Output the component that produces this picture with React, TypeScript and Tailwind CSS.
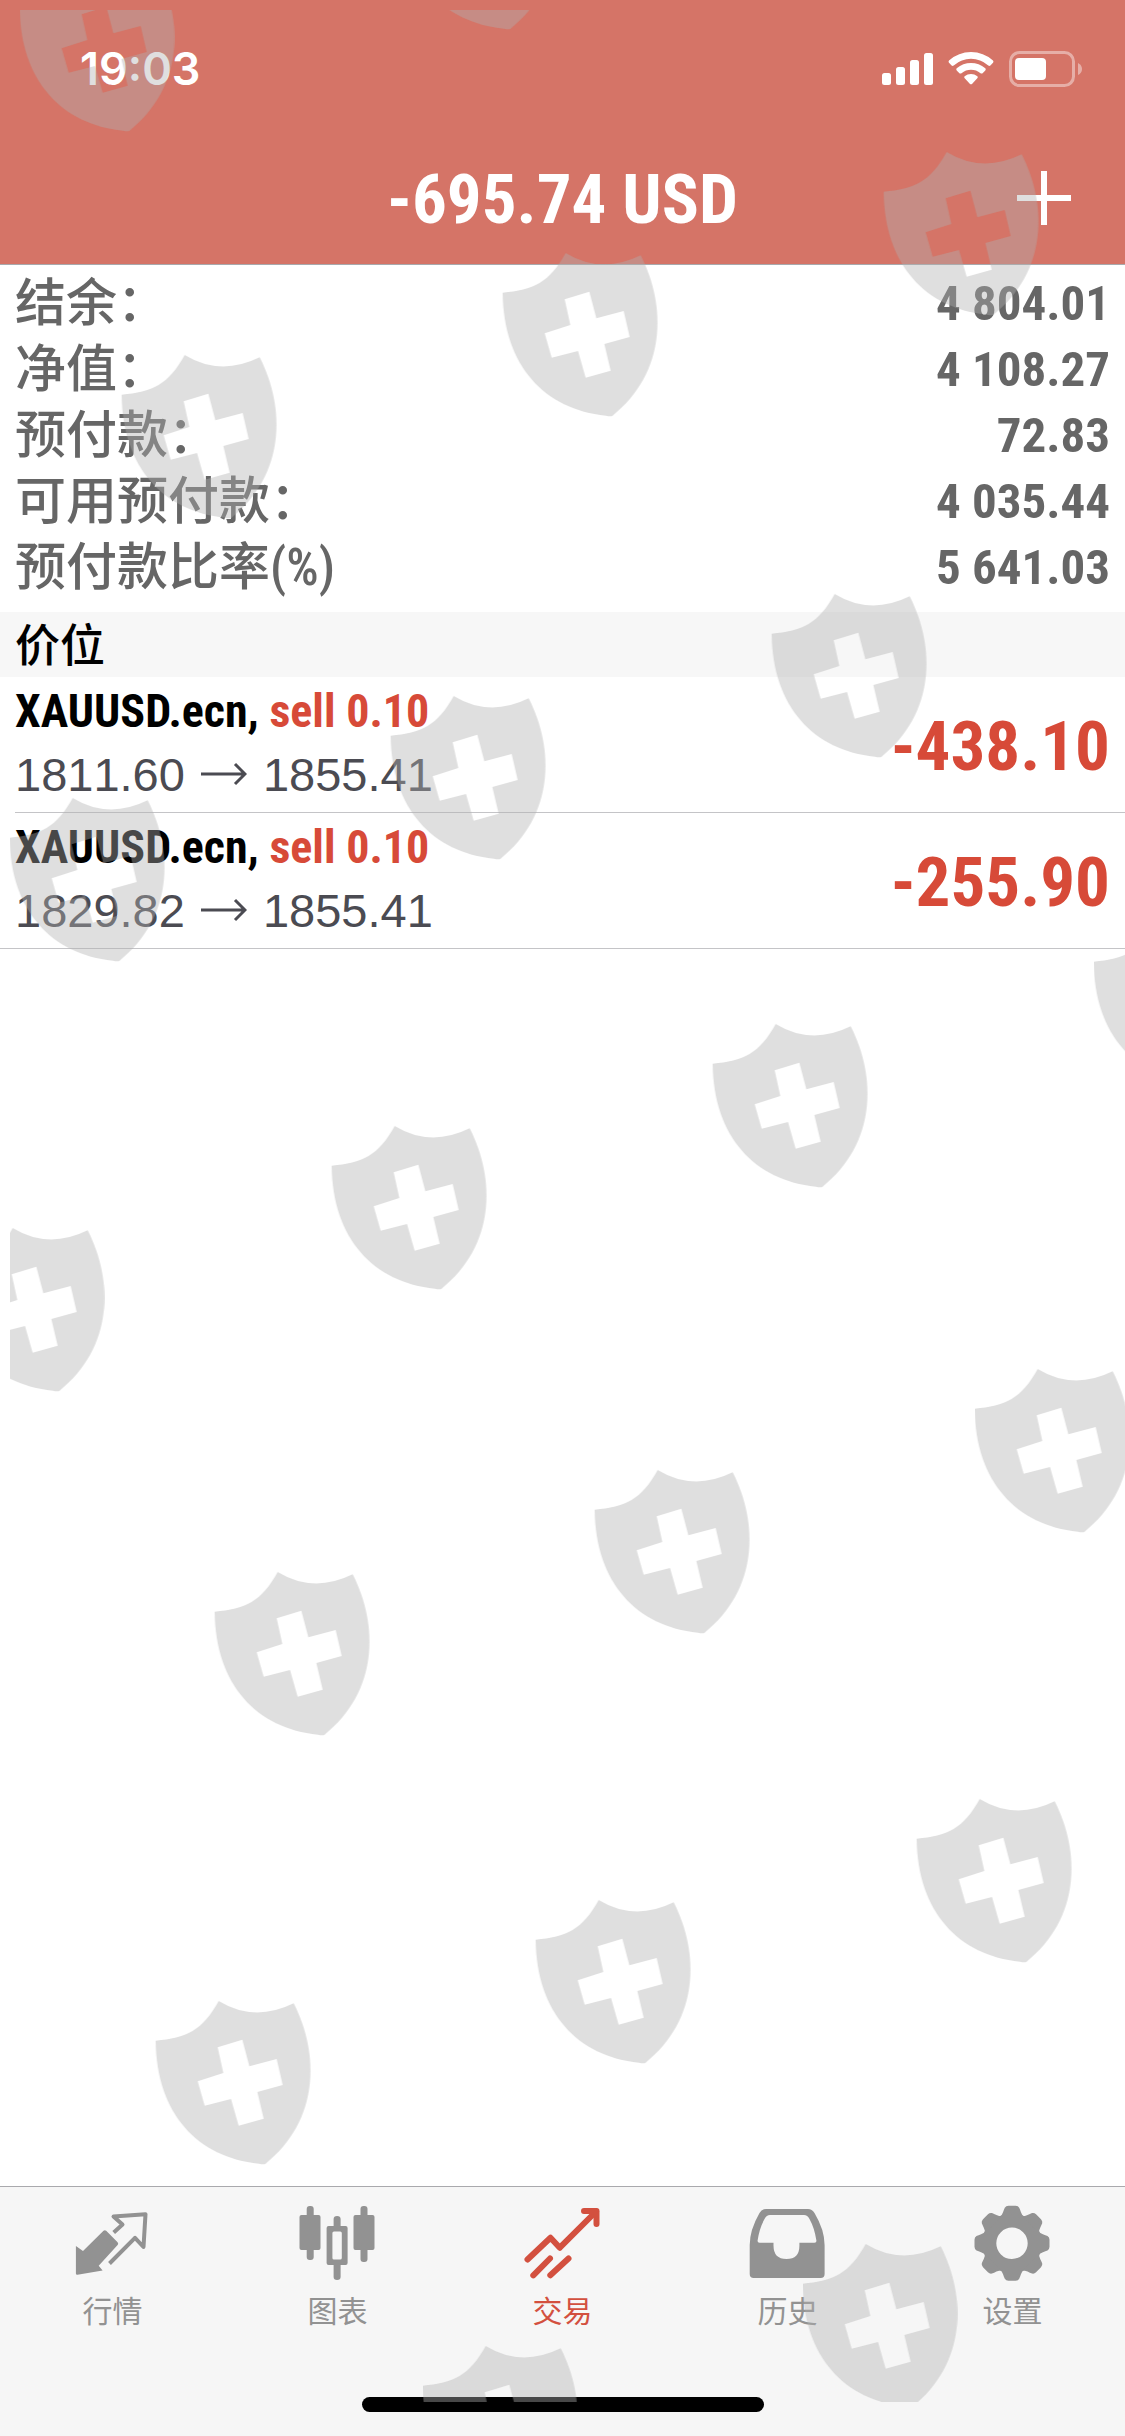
import React from "react";

const account = [
  { label: "结余：", value: "4 804.01" },
  { label: "净值：", value: "4 108.27" },
  { label: "预付款：", value: "72.83" },
  { label: "可用预付款：", value: "4 035.44" },
  { label: "预付款比率(%)", value: "5 641.03" },
];

const positions = [
  { symbol: "XAUUSD.ecn,", side: "sell 0.10", open: "1811.60", current: "1855.41", profit: "-438.10" },
  { symbol: "XAUUSD.ecn,", side: "sell 0.10", open: "1829.82", current: "1855.41", profit: "-255.90" },
];

/* Upper-left peak of every shield in the watermark. */
const shields = [
  [83, -32], [464, -134],
  [185, 355], [566, 253], [947, 152],
  [73, 798], [454, 696], [835, 594],
  [13, 1228], [395, 1126], [776, 1024], [1157, 922],
  [278, 1572], [658, 1470], [1038, 1369],
  [219, 2001], [599, 1900], [980, 1799],
  [486, 2346], [866, 2244],
];

function Watermark() {
  return (
    <svg
      aria-hidden="true"
      viewBox="0 0 1125 2436"
      preserveAspectRatio="xMinYMin slice"
      className="pointer-events-none absolute inset-0 h-full w-full"
    >
      <defs>
        <clipPath id="area">
          <rect x="10" y="10" width="1115" height="2392" />
        </clipPath>
        <path
          id="shield"
          fillRule="evenodd"
          transform="translate(-76 -13.7) scale(0.3333)"
          d="M227 41Q334 106 452 48C530 200 530 400 367 530C360 532 354 530 348 529C165 510 40 380 38 160C130 152 178 130 227 41ZM224 180L241 257L164 282L185 355L264 335L287 415L362 394L343 314L419 293L401 215L319 237L298 157Z"
        />
      </defs>
      <g clipPath="url(#area)" fill="#b0b0b0" opacity="0.41">
        {shields.map(([x, y]) => (
          <use key={`${x}-${y}`} href="#shield" x={x} y={y} />
        ))}
      </g>
    </svg>
  );
}

function StatusIcons() {
  return (
    <svg viewBox="0 0 202 36" className="h-9 w-[202px]" aria-label="信号 无线网络 电池" role="img">
      <g fill="#fff">
        <rect x="0" y="22" width="9" height="12" rx="2.5" />
        <rect x="14" y="16" width="9" height="18" rx="2.5" />
        <rect x="28" y="9" width="9" height="25" rx="2.5" />
        <rect x="42" y="2" width="9" height="32" rx="2.5" />
        <path d="M67 9.500Q66 10.700 67 11.800L69.600 14.500Q70.600 15.300 71.700 14.400Q79.500 7.800 89 7.800T106.300 14.400Q107.400 15.300 108.400 14.500L111 11.800Q112 10.700 111 9.500Q101.500 1 89 1T67 9.500Z" />
        <path d="M74.700 17.300Q73.700 18.300 74.700 19.400L77.400 22.200Q78.400 23 79.500 22.200Q83.700 18.800 89 18.800T98.500 22.200Q99.600 23 100.600 22.200L103.300 19.400Q104.300 18.300 103.300 17.300Q97 12 89 12T74.700 17.300Z" />
        <path d="M82.600 25.200Q81.700 26.200 82.700 27.200L88 32.900Q89 33.800 90 32.900L95.300 27.200Q96.300 26.200 95.400 25.200Q92.500 23 89 23T82.600 25.200Z" />
        <rect x="133" y="7" width="31" height="22" rx="4" />
      </g>
      <g opacity="0.42">
        <rect x="128.500" y="1.500" width="63" height="33" rx="9" fill="none" stroke="#fff" strokeWidth="3" />
        <path d="M196 12Q200 14 200 18T196 24Z" fill="#fff" />
      </g>
    </svg>
  );
}

function QuotesIcon() {
  return (
    <>
      <path d="M4.900 45L12 50L32.500 29.800Q33.800 28.500 35.200 29.800L46.600 41.200Q47.800 42.600 46.600 44L27.700 64.700L31.600 69.500L6.500 73.800Q4.900 74 4.900 72.500Z" fill="currentColor" />
      <path d="M42.700 31.500L51.500 23.500L42.500 15.500L74.500 13.200L72.500 46L64 36.800L38.500 62.500" fill="none" stroke="currentColor" strokeWidth="4" strokeLinejoin="round" />
    </>
  );
}

function ChartIcon() {
  return (
    <g fill="currentColor">
      <rect x="3.500" y="14" width="21" height="35" rx="2" />
      <rect x="10.700" y="5" width="7" height="54" rx="3" />
      <path fillRule="evenodd" d="M32.600 25H49.600Q51.600 25 51.600 27V62Q51.600 64 49.600 64H32.600Q30.600 64 30.600 62V27Q30.600 25 32.600 25ZM36.400 32V57Q36.400 58.500 38 58.500H44.200Q45.800 58.500 45.800 57V32Q45.800 30.500 44.200 30.500H38Q36.400 30.500 36.400 32Z" />
      <path d="M37.600 26V18Q37.600 15 41.100 15T44.600 18V26ZM37.600 63V76Q37.600 79 41.100 79T44.600 76V63Z" />
      <rect x="57.500" y="14" width="21" height="35" rx="2" />
      <rect x="64.500" y="5" width="7" height="56" rx="3" />
    </g>
  );
}

function TradeIcon() {
  return (
    <g fill="none" stroke="currentColor" strokeWidth="6" strokeLinecap="round" strokeLinejoin="round">
      <path d="M6.500 58.500L29.500 36.700L38.800 46.700L75 10.500" />
      <path d="M63 10H75.500V23" />
      <path d="M12.300 74.300L29 57.500M29.300 74.300L47.500 57.500" />
    </g>
  );
}

function HistoryIcon() {
  return (
    <path
      fill="currentColor"
      fillRule="evenodd"
      d="M20 8H62Q66 8 68.500 12Q78.600 29 78.600 44V73Q78.600 77 74.600 77H7.700Q3.700 77 3.700 73V44Q3.700 29 13.500 12Q16 8 20 8ZM24 14Q20.500 14 18.500 18Q13.500 27 11.600 39.500Q11.300 41.800 13.500 41.800H27.500V44.500Q27.500 58 40.500 58T53.400 44.500V41.800H68.500Q70.700 41.800 70.400 39.500Q68.500 27 63.500 18Q61.500 14 58 14Z"
    />
  );
}

function SettingsIcon() {
  return (
    <g transform="translate(41 42.300)">
      <circle r="22.700" fill="none" stroke="currentColor" strokeWidth="14" />
      {[0, 45, 90, 135, 180, 225, 270, 315].map((a) => (
        <path
          key={a}
          transform={`rotate(${a})`}
          fill="currentColor"
          d="M-12 -26C-9 -29 -8.500 -33 -7.200 -35.500Q-6 -37.500 -3.500 -37.500H3.500Q6 -37.500 7.200 -35.500C8.500 -33 9 -29 12 -26Z"
        />
      ))}
    </g>
  );
}

const tabs = [
  { label: "行情", Icon: QuotesIcon },
  { label: "图表", Icon: ChartIcon },
  { label: "交易", Icon: TradeIcon, active: true },
  { label: "历史", Icon: HistoryIcon },
  { label: "设置", Icon: SettingsIcon },
];

export default function App() {
  return (
    <div className="relative flex min-h-screen flex-col overflow-hidden bg-white font-['Roboto_Condensed','Noto_Sans_CJK_SC',sans-serif]">
      <header className="border-b border-[#a9a9ad] bg-[#d57467] text-white">
        <div className="flex h-33 items-center justify-between pt-1.5 pr-[41px] pl-20">
          <time className="font-['Inter',sans-serif] text-[45px] font-semibold">19:03</time>
          <StatusIcons />
        </div>
        <div className="grid h-33 grid-cols-[1fr_auto_1fr] items-center">
          <h1 className="col-start-2 pt-0.5 text-[69px] leading-none font-bold">-695.74 USD</h1>
          <button type="button" aria-label="添加" className="mr-[53px] justify-self-end">
            <svg viewBox="0 0 56 56" className="size-14" fill="none" stroke="#fff" strokeWidth="6">
              <path d="M28 1V55M1 28H55" />
            </svg>
          </button>
        </div>
      </header>

      <main className="flex-1">
        <dl className="px-[15px] pt-[5px] pb-3 font-bold text-[#666666]">
          {account.map((row) => (
            <div key={row.label} className="flex h-[66px] items-center justify-between">
              <dt className="text-[51px] leading-none font-medium">{row.label}</dt>
              <dd className="text-[49px] leading-none">{row.value}</dd>
            </div>
          ))}
        </dl>

        <h2 className="flex h-[65px] items-center bg-[#f7f7f7] px-[15px] pt-1 text-[45px] leading-none font-medium text-black">
          价位
        </h2>

        <ul className="border-b border-[#c4c4c7]">
          {positions.map((p, i) => (
            <li key={p.open} className="pl-[15px]">
              <div className={i > 0 ? "border-t border-[#c4c4c7]" : ""}>
                <div className="flex h-[135px] items-center justify-between pr-[15px]">
                  <div className="pb-1">
                    <p className="text-[46px] leading-[63px] font-bold text-black">
                      {p.symbol} <span className="text-[#d74a38]">{p.side}</span>
                    </p>
                    <p className="flex items-center font-['Liberation_Sans',sans-serif] text-[47px] leading-[63px] text-[#4b4b52] [font-kerning:none]">
                      {p.open}
                      <svg viewBox="0 0 46 30" className="mx-4 h-[30px] w-[46px]" fill="none" stroke="currentColor" strokeWidth="3" role="img" aria-label="至">
                        <path d="M0 15H44M34 5L44 15L34 25" />
                      </svg>
                      {p.current}
                    </p>
                  </div>
                  <strong className="pt-1 text-[69px] leading-none font-bold text-[#d74a38]">{p.profit}</strong>
                </div>
              </div>
            </li>
          ))}
        </ul>
      </main>

      <footer className="flex h-[250px] flex-col items-center justify-between border-t border-[#a9a9ad] bg-[#f6f6f6] pt-3.5 pb-6">
        <nav className="grid w-full grid-cols-5">
          {tabs.map(({ label, Icon, active }) => (
            <button
              key={label}
              type="button"
              aria-current={active ? "page" : undefined}
              className={`flex flex-col items-center font-['Noto_Sans_CJK_SC',sans-serif] ${active ? "text-[#d3503f]" : "text-[#929292]"}`}
            >
              <svg viewBox="0 0 84 84" className="size-21" aria-hidden="true">
                <Icon />
              </svg>
              <span className="mt-1.5 text-[30px] leading-9">{label}</span>
            </button>
          ))}
        </nav>
        <div className="h-[15px] w-[402px] rounded-full bg-black" />
      </footer>

      <Watermark />
    </div>
  );
}
